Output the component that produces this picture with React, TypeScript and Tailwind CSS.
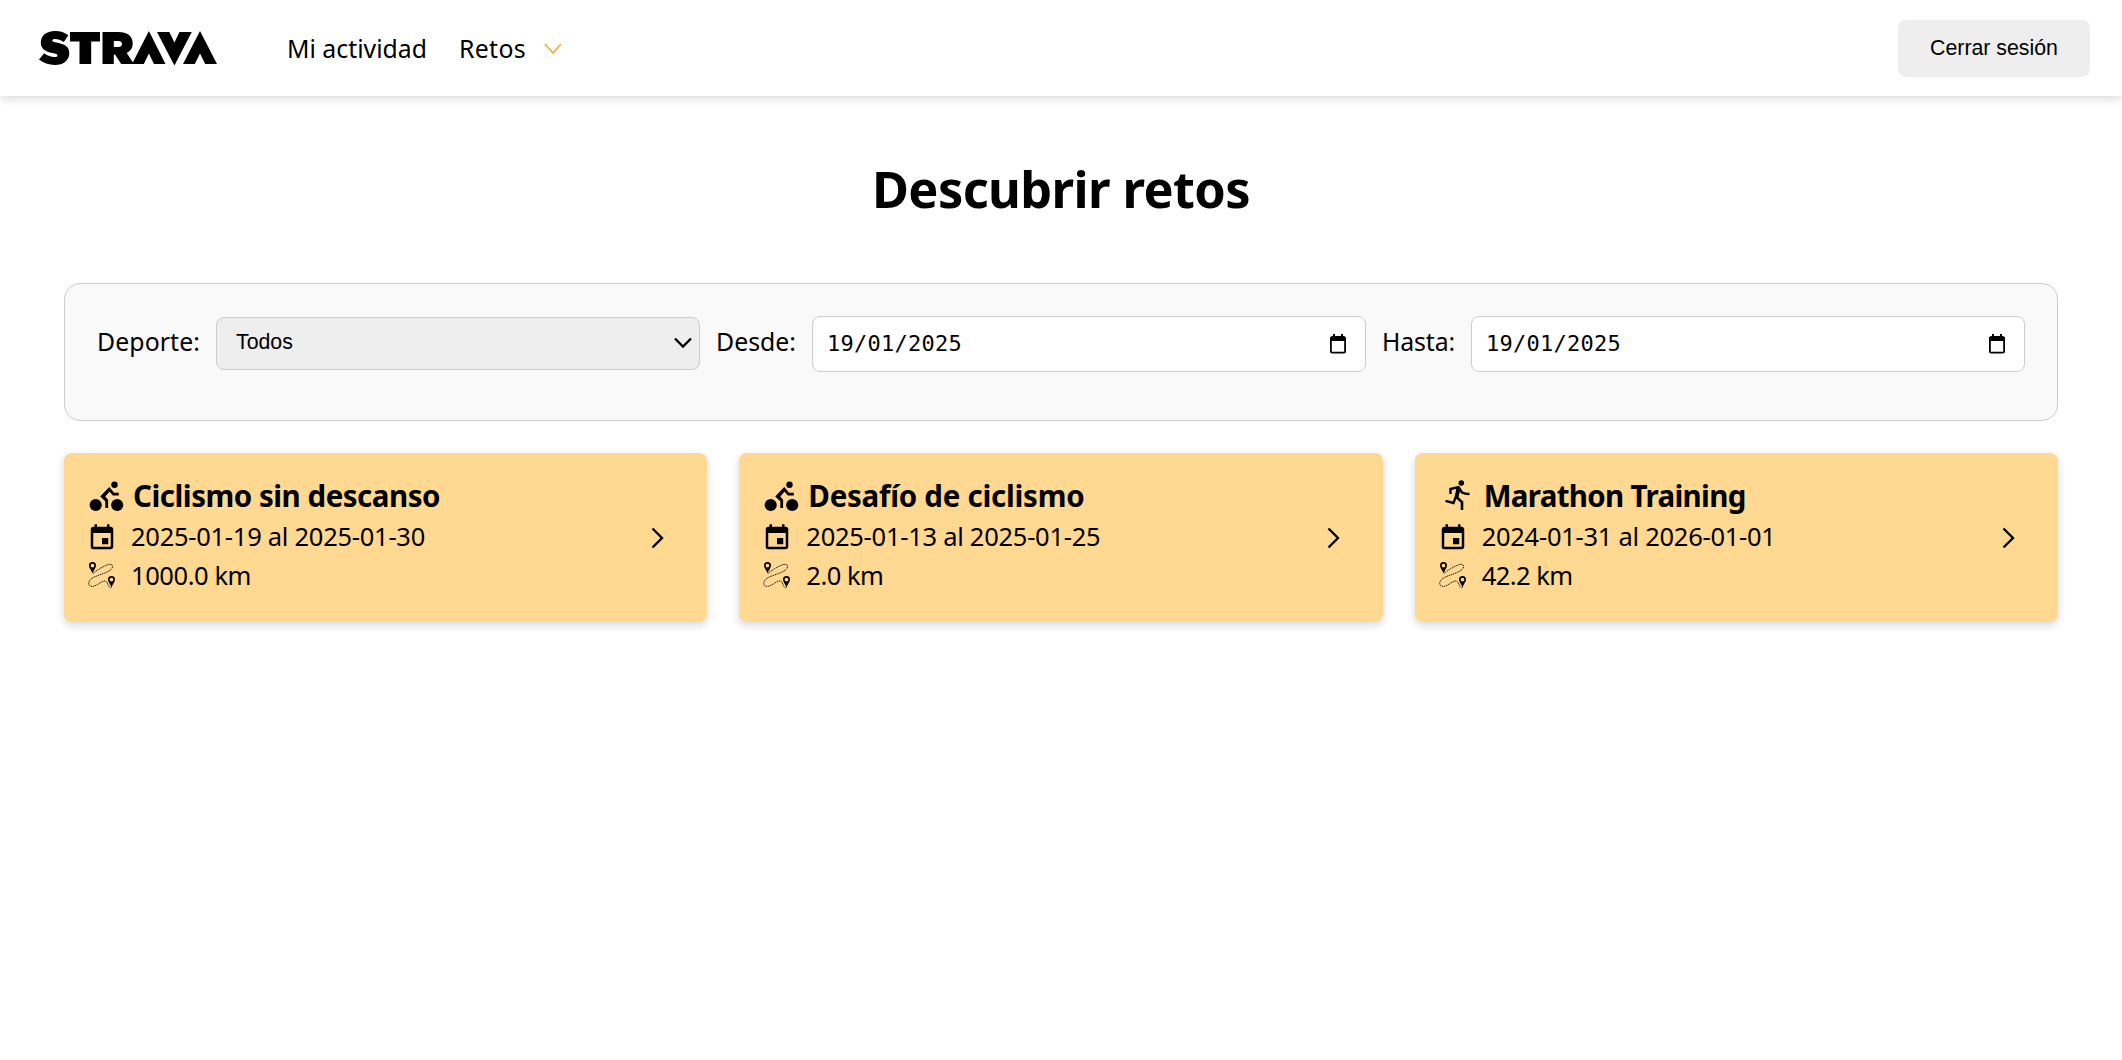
import { useEffect, useState } from "react";
import type { ReactNode } from "react";

function Logo() {
  return (
    <svg width="178" height="35" viewBox="0 0 178 35" className="block" fill="#000">
      <path d="M16 0c5.500 0 9.800 1.500 13.300 4.200L24.800 11c-2.800-1.900-6-3-8.800-3-1.800 0-2.700.6-2.700 1.500 0 1 1.300 1.500 5.400 2.300 7.500 1.500 11.600 4.300 11.600 10.200 0 7.500-5.800 12-14.500 12C9.800 34 4.200 32.200 0 28.600l5.200-6.400c3.200 2.500 6.800 3.800 10.200 3.800 2 0 3-.6 3-1.600s-1.200-1.600-5-2.300C6.500 20.700 1.800 18 1.800 11.800 1.800 5 7 0 16 0z" />
      <path d="M31 1h30v9.500h-8.800V33H40.500V10.500H31z" />
      <path d="M63.500 1h15.700c9.500 0 14.500 4.500 14.500 11.300 0 4.700-2.200 7.800-6 9.800L95 33H82.200l-6.200-9.500h-1.200V33H63.500zM74.800 10v6h4.400c2.400 0 3.800-1.100 3.800-3s-1.400-3-3.800-3z" fillRule="evenodd" />
      <path d="M109.900 0 126.500 33H115l-5.100-10.500L104.800 33H93z" />
      <path d="M118 1h12.300l5.100 10.500L140.500 1h12.300L135.400 34.500z" />
      <path d="M161 0 178 33h-11.800L161 22.500 155.800 33H144z" />
    </svg>
  );
}

function Cyclist() {
  return (
    <svg width="36" height="36" viewBox="0 0 36 36" className="mt-1 block" fill="none" stroke="#000">
      <circle cx="7.700" cy="25" r="6.100" fill="#000" stroke="none" />
      <circle cx="29.200" cy="25" r="6.100" fill="#000" stroke="none" />
      <circle cx="26.500" cy="4.700" r="3.200" fill="#000" stroke="none" />
      <path d="M18.700 28v-7.300L14.200 16.500l7-7.300 4.300 5h5.300" strokeWidth="2.800" />
      <path d="m12.800 16.200 7.500-7.700 2.500 1.500-5.500 6.500 2.500 3-1.300 2z" fill="#000" stroke="none" />
    </svg>
  );
}

function Runner() {
  return (
    <svg width="36" height="36" viewBox="0 0 36 36" className="mt-1 block" fill="none" stroke="#000">
      <circle cx="22.300" cy="3" r="2.800" fill="#000" stroke="none" />
      <path d="M11.500 14V9l8-2 3.500 5.500c2 1.200 4 1.500 7.500 1.500" strokeWidth="2.400" />
      <path d="m19.300 7.500-2 9.500 5.700 5V30" strokeWidth="2.600" />
      <path d="m17.500 15-3 8-8-2.200" strokeWidth="2.400" />
      <path d="m17.500 7.500 4 .5-2 9.500-3.500-1.500z" fill="#000" stroke="none" />
    </svg>
  );
}

function Pin({ x, y }: { x: number; y: number }) {
  return (
    <path
      transform={`translate(${x} ${y})`}
      d="M3.500 0A3.500 3.500 0 0 0 0 3.600C0 6 2.200 8 3.500 11.200 4.800 8 7 6 7 3.600A3.500 3.500 0 0 0 3.500 0zm0 1.700a1.900 1.900 0 1 1 0 3.800 1.900 1.900 0 0 1 0-3.800z"
      fill="#000"
      fillRule="evenodd"
    />
  );
}

function RouteIcon() {
  return (
    <svg width="28" height="28" viewBox="0 0 28 28" className="block">
      <path
        d="M4.800 12.600C9 9 16 4.800 20.500 3.500c4-1 5.500 2 2.500 5C19 12.500 7 14.500 3 18c-4 3.700-2.500 8.300 2.500 7.300C9.500 24.300 13 20.300 16.500 20c3.500-.2 3 5 6 7l1.500-1.500"
        fill="none"
        stroke="#000"
        strokeWidth="0.900"
        strokeDasharray="1.300 0.700"
      />
      <Pin x={1} y={1} />
      <Pin x={20} y={15} />
    </svg>
  );
}

function EventIcon() {
  return (
    <svg width="30" height="30" viewBox="0 0 24 24" className="block" fill="#000">
      <path d="M17 12h-5v5h5v-5zM16 1v2H8V1H6v2H5c-1.110 0-1.990.9-1.990 2L3 19a2 2 0 0 0 2 2h14c1.100 0 2-.9 2-2V5c0-1.100-.9-2-2-2h-1V1h-2zm3 18H5V8h14v11z" />
    </svg>
  );
}

function DateField({ label, value, id }: { label: string; value: string; id: string }) {
  return (
    <>
      <Label id={id}>{label}</Label>
      <div id={id} className="mr-4 flex h-14 min-w-0 flex-1 items-center justify-between rounded-lg border border-[#ccc] bg-white pl-[14px] pr-[17px] last:mr-0">
        <span className="font-['DejaVu_Sans_Mono',monospace] text-[22px] leading-none tracking-[0.26px]">{value}</span>
        <svg width="20" height="20" viewBox="0 0 20 20" fill="#000">
          <path d="M15.500 2H15V0h-2v2H7V0H5v2h-.5C3 2 2 3 2 4v13.500C2 18.500 3 19.500 4 19.500h12c1 0 2-1 2-2V4c0-1-1-2-2.500-2zM16.200 17.700H3.800V7h12.400z" />
        </svg>
      </div>
    </>
  );
}

function Label({ id, children }: { id: string; children: ReactNode }) {
  return (
    <label htmlFor={id} className="mb-1 mr-4 whitespace-nowrap">
      <Fit width={id === "sport" ? 103 : id === "from" ? 80 : 73} text={String(children)} size={24.8} />
    </label>
  );
}

/* Sets the tracking so that a line of text fills the given measure. */
function Fit({ text, width, size, bold = false }: { text: string; width: number; size: number; bold?: boolean }) {
  const [spacing, setSpacing] = useState(0);
  useEffect(() => {
    const ctx = document.createElement("canvas").getContext("2d");
    if (!ctx) return;
    ctx.font = `${bold ? 700 : 400} ${size}px "Noto Sans"`;
    setSpacing((width - ctx.measureText(text).width) / text.length);
  }, [text, width, size, bold]);
  return (
    <span
      className={bold ? "inline-block whitespace-nowrap font-bold" : "inline-block whitespace-nowrap"}
      style={{ width, fontSize: size, letterSpacing: spacing }}
    >
      {text}
    </span>
  );
}

const challenges = [
  { title: "Ciclismo sin descanso", titleWidth: 307, dates: "2025-01-19 al 2025-01-30", distance: "1000.0 km", distanceWidth: 120, sport: "bike" },
  { title: "Desafío de ciclismo", titleWidth: 276, dates: "2025-01-13 al 2025-01-25", distance: "2.0 km", distanceWidth: 77, sport: "bike" },
  { title: "Marathon Training", titleWidth: 262, dates: "2024-01-31 al 2026-01-01", distance: "42.2 km", distanceWidth: 91, sport: "run" },
];

export default function App() {
  return (
    <div className="min-h-screen bg-white font-['Noto_Sans',sans-serif] text-black">
      <header className="flex h-24 items-center justify-between pl-[39px] pr-8 shadow-[0_2px_10px_rgba(0,0,0,0.16)]">
        <nav className="flex items-center">
          <Logo />
          <div className="ml-[70px] flex items-center leading-8">
            <Fit text="Mi actividad" width={140} size={24.8} />
            <span className="ml-8 flex"><Fit text="Retos" width={67} size={24.8} /></span>
            <svg width="20" height="12" viewBox="0 0 20 12" className="ml-[17px] mt-0.5" fill="none" stroke="#ffa726" strokeWidth="1.600">
              <path d="m2 1 8 9 8-9" />
            </svg>
          </div>
        </nav>
        <button className="mt-px h-[57px] w-48 rounded-lg bg-[#eee] font-['Liberation_Sans',sans-serif] text-[21.3px]">Cerrar sesión</button>
      </header>
      <main className="px-16">
        <h1 className="mt-[63px] flex justify-center leading-[60px]"><Fit text="Descubrir retos" width={378} size={50.5} bold /></h1>
        <section className="mt-16 flex h-[138px] items-start rounded-2xl border border-[#ccc] bg-[#f9f9f9] px-8 pt-8">
          <div className="flex h-14 w-full items-center">
            <Label id="sport">Deporte:</Label>
            <div id="sport" className="mb-0.5 mr-4 flex h-[53px] w-[484px] items-center justify-between rounded-lg border border-[#ccc] bg-[#eee] pl-[19px] pr-[6px] font-['Liberation_Sans',sans-serif] text-[21.300px]">
              <span>Todos</span>
              <svg width="20" height="12" viewBox="0 0 20 12" fill="none" stroke="#000" strokeWidth="2.300">
                <path d="m2 1.500 8 8 8-8" />
              </svg>
            </div>
            <DateField id="from" label="Desde:" value="19/01/2025" />
            <DateField id="to" label="Hasta:" value="19/01/2025" />
          </div>
        </section>
        <section className="mt-8 grid grid-cols-3 gap-8">
          {challenges.map((c) => (
            <article key={c.title} className="flex h-[169px] items-center justify-between rounded-lg bg-[#ffd891] pl-6 pr-[43px] shadow-[0_3px_8px_rgba(0,0,0,0.16)]">
              <div className="h-[121px]">
                <h2 className="flex h-[38px] items-center gap-[9px]">
                  {c.sport === "bike" ? <Cyclist /> : <Runner />}
                  <Fit text={c.title} width={c.titleWidth} size={29.5} bold />
                </h2>
                <p className="flex h-[42px] items-center">
                  <span className="-ml-px mr-3.5 mt-[3px] w-[30px]"><EventIcon /></span>
                  <Fit text={c.dates} width={294} size={25.5} />
                </p>
                <p className="flex h-9 items-center">
                  <span className="mr-[15px] w-7"><RouteIcon /></span>
                  <Fit text={c.distance} width={c.distanceWidth} size={25.5} />
                </p>
              </div>
              <svg width="13" height="22" viewBox="0 0 13 22" fill="none" stroke="#000" strokeWidth="2.400">
                <path d="m1.500 1.500 9.500 9.500-9.500 9.500" />
              </svg>
            </article>
          ))}
        </section>
      </main>
    </div>
  );
}
